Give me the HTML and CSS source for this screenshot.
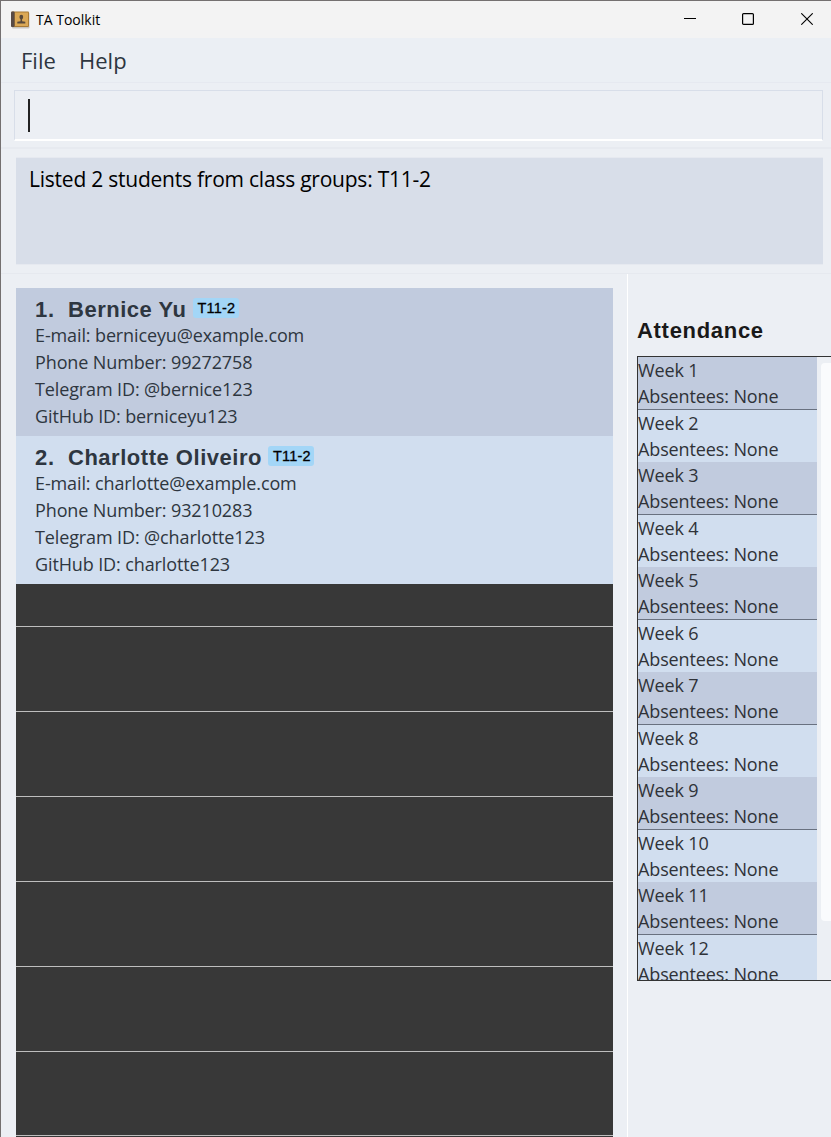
FILE: index.html
```html
<!DOCTYPE html>
<html lang="en">
<head>
<meta charset="utf-8">
<title>TA Toolkit</title>
<link rel="stylesheet" href="styles.css">
</head>
<body>
<div class="window">
  <header class="titlebar">
    <svg class="app-icon" width="19" height="18" viewBox="0 0 19 18">
      <rect x="1" y="1.5" width="17.5" height="16" rx="1" fill="#c9c5c0"/>
      <rect x="0.5" y="0.5" width="17.5" height="15.5" rx="1" fill="#a87a35"/>
      <rect x="4" y="1.5" width="13" height="13.5" fill="#dba855"/>
      <rect x="0" y="0.5" width="3.5" height="15.5" rx="1" fill="#594b45"/>
      <ellipse cx="10.3" cy="6" rx="1.9" ry="2.2" fill="#57483a"/>
      <path d="M9.5 7h1.6v3.2l3.2.6v1.7h-8v-1.7l3.2-.6z" fill="#57483a"/>
    </svg>
    <span class="app-name">TA Toolkit</span>
    <div class="controls">
      <svg width="12" height="12" viewBox="0 0 12 12"><path d="M0 5.5h12" stroke="#000"/></svg>
      <svg width="12" height="12" viewBox="0 0 12 12"><rect x=".6" y=".6" width="10.8" height="10.8" rx="1" fill="none" stroke="#000" stroke-width="1.2"/></svg>
      <svg width="12" height="12" viewBox="0 0 12 12"><path d="M.3.3l11.4 11.4M11.7.3L.3 11.7" stroke="#000" stroke-width="1.1"/></svg>
    </div>
  </header>
  <nav class="menubar"><span class="file">File</span><span class="help">Help</span></nav>
  <section class="command"><div class="command-box"><i class="caret"></i></div></section>
  <section class="result"><div class="result-box"><span class="result-text">Listed 2 students from class groups: T11-2</span></div></section>
  <main class="content">
    <section class="students">
      <article class="card">
        <h2><span class="num">1.</span><span class="name">Bernice Yu</span><span class="tag">T11-2</span></h2>
        <p>E-mail: berniceyu@example.com</p>
        <p>Phone Number: 99272758</p>
        <p>Telegram ID: @bernice123</p>
        <p>GitHub ID: berniceyu123</p>
      </article>
      <article class="card light">
        <h2><span class="num">2.</span><span class="name">Charlotte Oliveiro</span><span class="tag">T11-2</span></h2>
        <p>E-mail: charlotte@example.com</p>
        <p>Phone Number: 93210283</p>
        <p>Telegram ID: @charlotte123</p>
        <p>GitHub ID: charlotte123</p>
      </article>
      <div class="blank first"></div><div class="blank"></div><div class="blank"></div><div class="blank"></div><div class="blank"></div><div class="blank"></div><div class="blank last"></div><div class="blank"></div>
    </section>
    <aside class="attendance">
      <h1><span>Attendance</span></h1>
      <div class="weeks">
        <div class="week-list">
          <div class="week"><p>Week 1</p><p>Absentees: None</p></div>
          <div class="week"><p>Week 2</p><p>Absentees: None</p></div>
          <div class="week"><p>Week 3</p><p>Absentees: None</p></div>
          <div class="week"><p>Week 4</p><p>Absentees: None</p></div>
          <div class="week"><p>Week 5</p><p>Absentees: None</p></div>
          <div class="week"><p>Week 6</p><p>Absentees: None</p></div>
          <div class="week"><p>Week 7</p><p>Absentees: None</p></div>
          <div class="week"><p>Week 8</p><p>Absentees: None</p></div>
          <div class="week"><p>Week 9</p><p>Absentees: None</p></div>
          <div class="week"><p>Week 10</p><p>Absentees: None</p></div>
          <div class="week"><p>Week 11</p><p>Absentees: None</p></div>
          <div class="week"><p>Week 12</p><p>Absentees: None</p></div>
        </div>
        <div class="scrollbar"></div>
      </div>
    </aside>
  </main>
</div>
</body>
</html>
```
FILE: styles.css
```css
* { box-sizing: border-box; }
body, h1, h2, p { margin: 0; }
body { font-family: "Open Sans", "Noto Sans", sans-serif; color: #2e3640; overflow: hidden; }
.window { width: 831px; height: 1137px; display: flex; flex-direction: column; overflow: hidden; background: #eceff4; border-top: 1px solid #747070; border-left: 1px solid #747070; }

.titlebar { height: 37px; flex: none; display: flex; align-items: center; background: #f3f3f3; color: #000; padding: 0 18px 0 10px; }
.app-name { font-size: 14px; letter-spacing: 0; margin-left: 6px; }
.controls { margin-left: auto; display: flex; gap: 47px; }
.controls svg { display: block; margin-top: -1px; }
.controls svg:first-child { margin-right: -1px; }

.menubar { height: 45px; flex: none; display: flex; padding-left: 20px; font-size: 22px; line-height: 44px; border-bottom: 1px solid #e6e9f0; background: #ebeff4; }
.file { width: 58px; }
.command { height: 66px; flex: none; padding: 7px 8px 0 13px; border-bottom: 2px solid #e7eaf0; }
.command-box { height: 51px; padding: 8px 13px; border: 1px solid #d8dee9; border-bottom: 2px solid #fff; }
.caret { display: block; width: 2px; height: 33px; background: #222; }
.result { height: 125px; flex: none; padding: 8px 8px 0 15px; border-bottom: 1px solid #e6e9ef; }
.result-box { height: 108px; background: #d8dee9; border: 1px solid #e6e9f0; border-left: 0; border-right: 0; color: #000; padding: 4px 13px; font-size: 21px; line-height: 34px; white-space: nowrap; }
.result-text { letter-spacing: -0.23px; }

.content { flex: 1; min-height: 0; display: flex; }
.students { width: 627px; padding: 14px 14px 0 15px; border-right: 1px solid #fff; overflow: hidden; }
.card { height: 148px; padding: 7px 19px 0; background: #c1cbde; }
.light { background: #d1deef; }
.card h2 { height: 27px; display: flex; align-items: center; font: bold 22px/29px "Liberation Sans", Arial, sans-serif; white-space: nowrap; }
.num { width: 33px; letter-spacing: .8px; padding-top: 1px; }
.name { letter-spacing: .52px; padding-top: 1px; }
.tag { height: 20px; width: 46px; margin-left: 6px; margin-top: -1px; padding-left: 5px; border-radius: 3px; background: #a3d6f7; color: #000; font: 14.5px/20px "Liberation Sans", Arial, sans-serif; letter-spacing: .2px; -webkit-text-stroke: .3px #000; }
.card p { font-size: 18px; line-height: 27px; letter-spacing: -0.12px; white-space: nowrap; }
.blank { height: 85px; background: #383838; border-bottom: 1px solid #bebebe; }
.first { height: 43px; }
.last { height: 84px; }

.attendance { flex: 1; min-width: 0; padding: 42px 0 0 9px; }
.attendance h1 { height: 40px; font: bold 22px/29px "Liberation Sans", Arial, sans-serif; letter-spacing: .7px; color: #191919; }
.weeks { height: 625px; display: flex; overflow: hidden; border: 1px solid #333; border-right: 0; }
.week-list { width: 179px; flex: none; }
.week { height: 52px; background: #d1deef; font-size: 18px; line-height: 26px; letter-spacing: -0.12px; color: #2f3238; white-space: nowrap; }
.week:nth-child(odd) { height: 53px; background: #c1cbde; border-bottom: 1px solid #697180; }
.scrollbar { width: 14px; height: 558px; margin: 6px 0 0 4px; flex: none; border-radius: 4px; background: #fafbfd; }
```
